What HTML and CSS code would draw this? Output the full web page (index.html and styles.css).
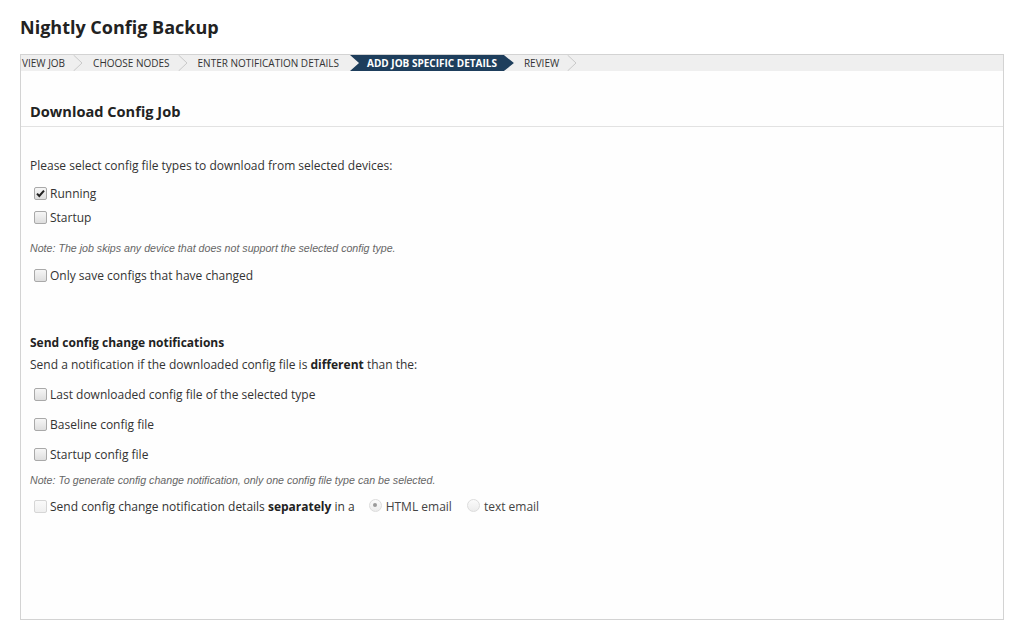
FILE: index.html
```html
<!DOCTYPE html>
<html>
<head>
<meta charset="utf-8">
<title>Nightly Config Backup</title>
<link rel="stylesheet" href="styles.css">
</head>
<body>
<div class="page">
  <h1 class="title">Nightly Config Backup</h1>
  <div class="wizard">
    <div class="steps">
      <span class="step first">VIEW JOB</span>
      <svg class="chev" width="10" height="16" viewBox="0 0 10 16"><polyline points="0.5,0 9,8 0.5,16" fill="none" stroke="#c9c9c9" stroke-width="1"/></svg>
      <span class="step">CHOOSE NODES</span>
      <svg class="chev" width="10" height="16" viewBox="0 0 10 16"><polyline points="0.5,0 9,8 0.5,16" fill="none" stroke="#c9c9c9" stroke-width="1"/></svg>
      <span class="step">ENTER NOTIFICATION DETAILS</span>
      <span class="step active">ADD JOB SPECIFIC DETAILS</span>
      <span class="step after-active">REVIEW</span>
      <svg class="chev" width="10" height="16" viewBox="0 0 10 16"><polyline points="0.5,0 9,8 0.5,16" fill="none" stroke="#c9c9c9" stroke-width="1"/></svg>
    </div>
    <div class="panel-head">Download Config Job</div>
    <div class="panel-body">
      <p class="intro">Please select config file types to download from selected devices:</p>
      <div class="choices">
        <label class="check-row"><span class="box checked"><svg width="11" height="11" viewBox="0 0 11 11"><path d="M2 5.6 L4.3 8 L9 2.6" fill="none" stroke="#222" stroke-width="2"/></svg></span>Running</label>
        <label class="check-row"><span class="box"></span>Startup</label>
      </div>
      <p class="note note-first">Note: The job skips any device that does not support the selected config type.</p>
      <label class="check-row only-changed"><span class="box"></span>Only save configs that have changed</label>

      <h2 class="section-title">Send config change notifications</h2>
      <p class="section-desc">Send a notification if the downloaded config file is <b>different</b> than the:</p>
      <div class="compare-list">
        <label class="check-row"><span class="box"></span>Last downloaded config file of the selected type</label>
        <label class="check-row"><span class="box"></span>Baseline config file</label>
        <label class="check-row"><span class="box"></span>Startup config file</label>
      </div>
      <p class="note note-second">Note: To generate config change notification, only one config file type can be selected.</p>
      <div class="check-row separate-row">
        <span class="box disabled"></span>
        <span class="sep-text">Send config change notification details <b>separately</b> in a</span>
        <span class="radio selected"><span class="dot"></span></span><span class="radio-label">HTML email</span>
        <span class="radio second"></span><span class="radio-label">text email</span>
      </div>
    </div>
  </div>
</div>
</body>
</html>
```
FILE: styles.css
```css
html, body {
  margin: 0;
  padding: 0;
  background: #ffffff;
}
body {
  font-family: "Open Sans", "Liberation Sans", Arial, sans-serif;
  color: #333333;
  font-size: 12px;
}
.page {
  padding: 15px 20px 0 20px;
}
.title {
  margin: 0 0 15px 0;
  font-size: 18px;
  line-height: 24px;
  font-weight: 700;
  color: #222222;
}
.wizard {
  border: 1px solid #d3d3d3;
  height: 564px;
  background: #fefefe;
}
.steps {
  display: flex;
  align-items: center;
  height: 16px;
  background: #efefef;
  font-size: 10px;
  color: #333333;
  white-space: nowrap;
}
.step {
  line-height: 16px;
}
.step.first {
  margin-left: 1px;
}
.chev {
  display: block;
  margin: 0 10px 0 8px;
  flex: none;
}
.step.active {
  margin-left: 11px;
  background: #1e3e5c;
  color: #ffffff;
  font-weight: 700;
  padding: 0 17px 0 17px;
  clip-path: polygon(0 0, calc(100% - 10px) 0, 100% 50%, calc(100% - 10px) 100%, 0 100%, 9px 50%);
}
.step.after-active {
  margin-left: 10px;
}
.panel-head {
  padding: 30px 9px 5px 9px;
  font-size: 14.6px;
  line-height: 20px;
  font-weight: 700;
  color: #222222;
  border-bottom: 1px solid #e2e2e2;
}
.panel-body {
  padding: 29px 9px 0 9px;
}
p, h2 {
  margin: 0;
}
.intro {
  line-height: 20px;
}
.choices {
  margin-top: 8px;
  display: flex;
  flex-direction: column;
  gap: 4px;
}
.check-row {
  display: flex;
  align-items: center;
  height: 20px;
  line-height: 20px;
  padding-left: 4px;
}
.box {
  width: 11px;
  height: 11px;
  border: 1px solid #a9a9a9;
  border-radius: 2px;
  background: linear-gradient(#f6f6f6, #dedede);
  margin-right: 3px;
  display: flex;
  align-items: center;
  justify-content: center;
  flex: none;
  position: relative;
  top: -1px;
}
.box.disabled {
  border-color: #d6d6d6;
  background: linear-gradient(#fafafa, #efefef);
}
.note {
  font-family: "Liberation Sans", Arial, sans-serif;
  font-style: italic;
  font-size: 10.65px;
  color: #666666;
  line-height: 20px;
}
.note-first {
  margin-top: 10px;
}
.only-changed {
  margin-top: 8px;
}
.section-title {
  margin-top: 47px;
  font-size: 12px;
  font-weight: 700;
  line-height: 20px;
  color: #222222;
}
.section-desc {
  margin-top: 2px;
  line-height: 20px;
}
.section-desc b, .sep-text b {
  color: #222222;
}
.compare-list {
  margin-top: 10px;
  display: flex;
  flex-direction: column;
  gap: 10px;
}
.note-second {
  margin-top: 5px;
}
.separate-row {
  margin-top: 7px;
}
.sep-text {
  margin-right: 14px;
}
.radio {
  width: 11px;
  height: 11px;
  border: 1px solid #dcdcdc;
  border-radius: 50%;
  background: linear-gradient(#fbfbfb, #ececec);
  display: flex;
  align-items: center;
  justify-content: center;
  margin-right: 4px;
  position: relative;
  top: -2px;
  flex: none;
}
.radio .dot {
  width: 4px;
  height: 4px;
  border-radius: 50%;
  background: #9a9a9a;
}
.radio.second {
  margin-left: 15px;
}
.radio-label {
  color: #444444;
}
```
